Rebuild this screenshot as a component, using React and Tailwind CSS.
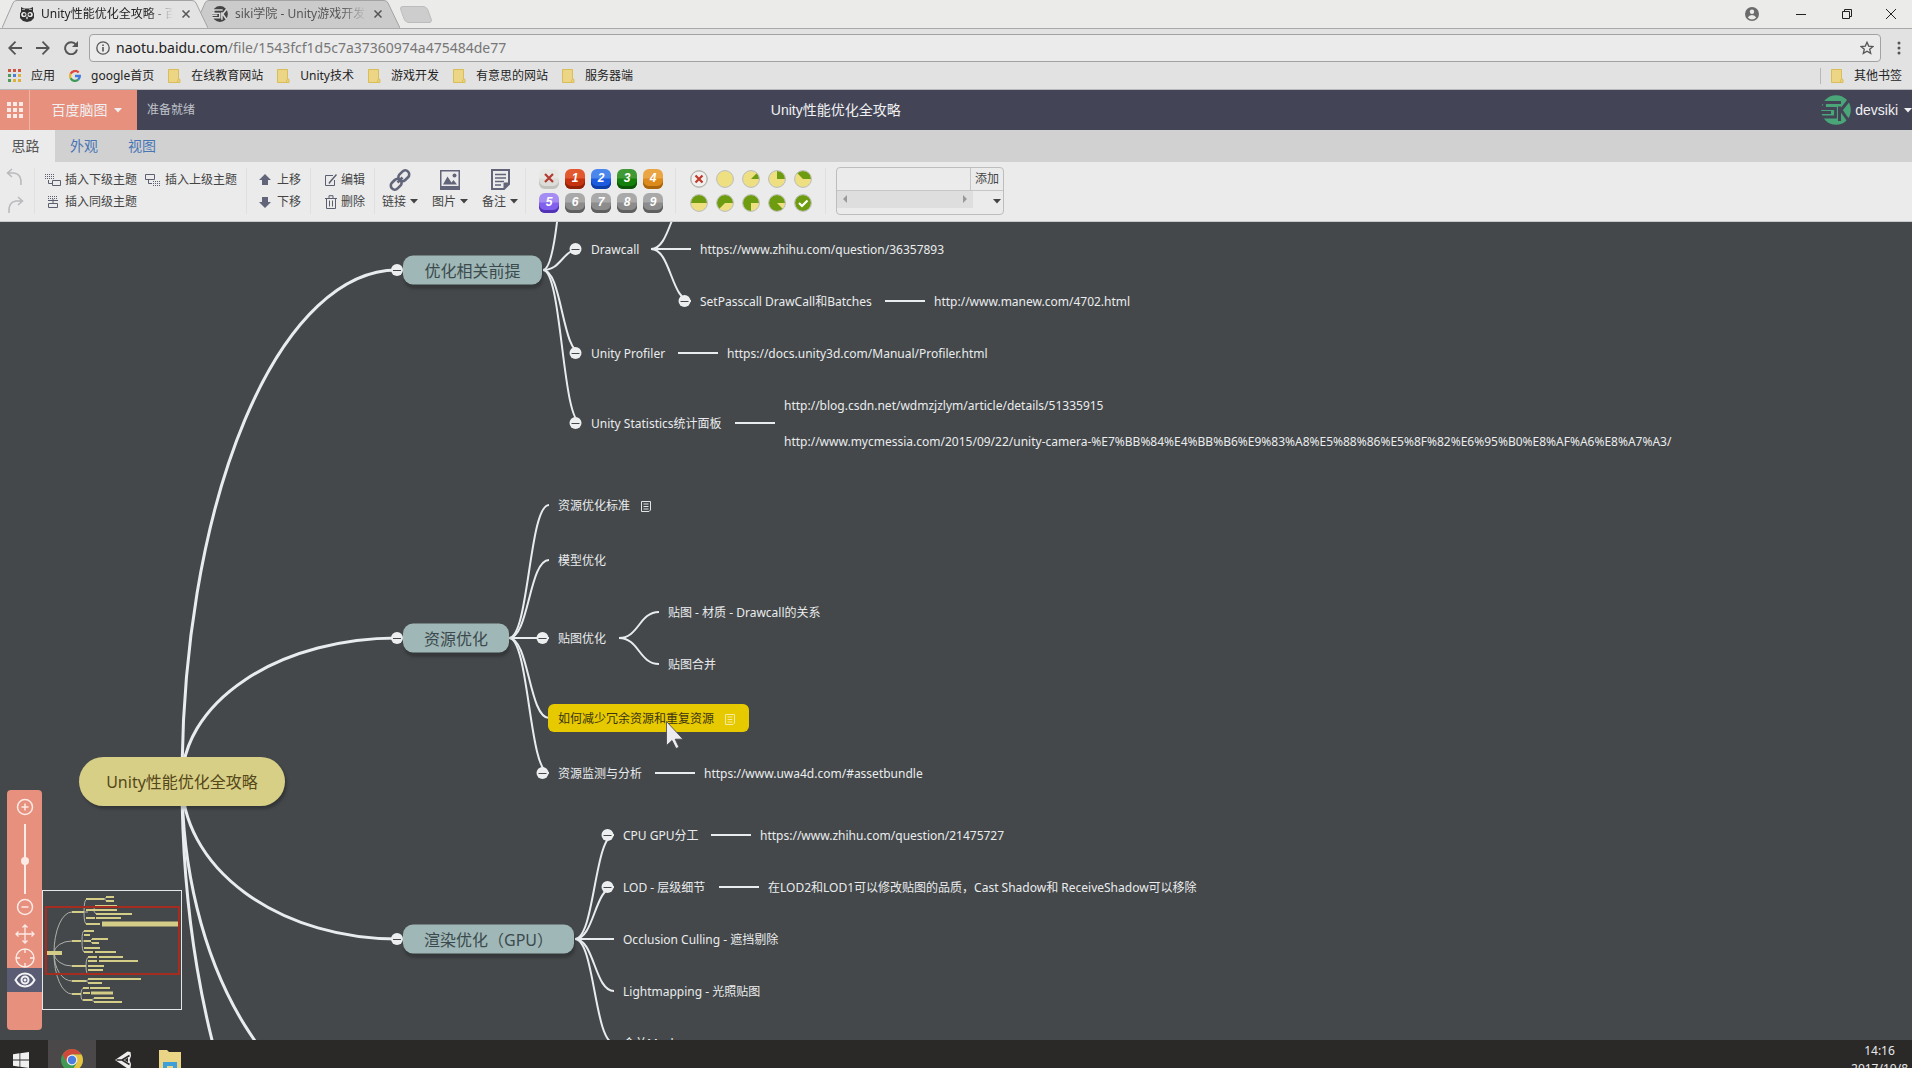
import React from "react";

const UI = "font-['Noto_Sans','Noto_Sans_CJK_SC',sans-serif]";

/* ---------- shared bits ---------- */

function Caret({ className = "" }) {
  return (
    <svg viewBox="0 0 8 5" className={"h-[5px] w-2 shrink-0 fill-current " + className} aria-hidden="true">
      <path d="M0 0h8L4 4.6z" />
    </svg>
  );
}

function Folder() {
  return (
    <svg viewBox="0 0 13 14" className="h-3.5 w-[13px] shrink-0" aria-hidden="true">
      <path d="M.5.5h10v9l1.500 1v3H.5z" fill="#ecd584" stroke="#d9bd58" />
      <path d="M10.500 9.500 9 13.500" stroke="#d9bd58" fill="none" />
    </svg>
  );
}

/* ---------- browser frame ---------- */

function BrowserTab({ active, icon, title, className = "" }) {
  return (
    <div className={"relative flex h-7 w-[206px] shrink-0 items-center pl-[18px] " + className}>
      <svg viewBox="0 0 206 28" preserveAspectRatio="none" className="absolute inset-0 h-full w-full" aria-hidden="true">
        <path
          d="M0 28 L11 3 Q12 .5 15 .5 H190 Q193 .5 194 3 L206 28"
          fill={active ? "#e3e3e3" : "#cbcbcb"}
          stroke="#a3a3a3"
        />
      </svg>
      <button className="relative flex min-w-0 flex-1 items-center gap-[7px] text-left">
        {icon}
        <span
          className={
            "block w-[132px] overflow-hidden whitespace-nowrap text-xs [mask-image:linear-gradient(to_right,#000_80%,transparent)] " +
            (active ? "text-[#222]" : "text-[#555]")
          }
        >
          {title}
        </span>
      </button>
      <button className="relative mr-4 grid size-3 place-items-center text-[#555]" aria-label="关闭标签页">
        <svg viewBox="0 0 8 8" className="size-2">
          <path d="M.5.5l7 7M7.5.5l-7 7" stroke="currentColor" strokeWidth="1.5" />
        </svg>
      </button>
    </div>
  );
}

function OwlIcon() {
  return (
    <svg viewBox="0 0 14 15" className="h-[15px] w-3.5 shrink-0" aria-hidden="true">
      <path d="M1 0l3 1.400h6L13 0v5l1 1v5l-3 3-4 1-4-1-3-3V6l1-1z" fill="#333" />
      <path d="M2 2.500h3M9 2.500h3" stroke="#bbb" strokeWidth=".8" />
      <circle cx="3.800" cy="7.500" r="2.600" fill="#eee" />
      <circle cx="10.200" cy="7.500" r="2.600" fill="#eee" />
      <circle cx="4.200" cy="7.500" r="1.300" fill="#333" />
      <circle cx="9.800" cy="7.500" r="1.300" fill="#333" />
      <path d="M7 9l1 2-1 1.400-1-1.400z" fill="#ddd" />
    </svg>
  );
}

function SkLogo({ color, cut, className }) {
  return (
    <svg viewBox="0 0 30 30" className={"shrink-0 " + className} aria-hidden="true">
      <circle cx="15" cy="15" r="14.800" fill={color} />
      <path d="M0 7.500H20M3.500 7.500V13.500H14.500V22H0M0 17.500H10" stroke={cut} strokeWidth="2.800" fill="none" />
      <path d="M0 10.500h3v4.500H0z" fill={cut} />
      <path d="M5 10.500h14" stroke={color} strokeWidth="2.600" />
      <path d="M18.500 11.500V26M28 5l-8 10 7 10" stroke={cut} strokeWidth="3" fill="none" />
    </svg>
  );
}

function TabStrip() {
  return (
    <div className="relative flex h-7 items-stretch bg-[#ebebea] pl-0.5">
      <BrowserTab active icon={<OwlIcon />} title="Unity性能优化全攻略 - 百度脑图" className="z-10" />
      <BrowserTab
        icon={<SkLogo color="#444" cut="#d8d8d8" className="size-4" />}
        title="siki学院 - Unity游戏开发学院"
        className="-ml-3.5"
      />
      <button aria-label="新标签页" className="my-auto ml-0.5 h-[17px] w-7 skew-x-[20deg] rounded-sm border border-[#bcbcbc] bg-[#cdcdcd]" />
      <div className="ml-auto flex items-center text-[#222]">
        <button aria-label="用户" className="grid h-7 w-[52px] place-items-center">
          <svg viewBox="0 0 14 14" className="size-3.5">
            <circle cx="7" cy="7" r="7" fill="#6b6b6b" />
            <circle cx="7" cy="4.800" r="2.200" fill="#ebebea" />
            <path d="M2.800 10.500q1.200-2.500 4.200-2.500t4.200 2.500Q9.500 12.400 7 12.400t-4.200-1.900z" fill="#ebebea" />
          </svg>
        </button>
        <button aria-label="最小化" className="grid h-7 w-[46px] place-items-center">
          <span className="h-px w-2.5 bg-[#222]" />
        </button>
        <button aria-label="还原" className="grid h-7 w-[46px] place-items-center">
          <svg viewBox="0 0 10 10" className="size-2.5" fill="none" stroke="currentColor">
            <path d="M.5 2.500h7v7h-7zM2.500 2.500v-2h7v7h-2" />
          </svg>
        </button>
        <button aria-label="关闭" className="grid h-7 w-[42px] place-items-center">
          <svg viewBox="0 0 10 10" className="size-2.5" stroke="currentColor">
            <path d="M0 0l10 10M10 0L0 10" />
          </svg>
        </button>
      </div>
    </div>
  );
}

function AddressBar() {
  return (
    <div className="flex h-[34px] items-center border-t border-[#a9a9a9] bg-[#e2e2e2] pt-1">
      <div className="flex w-[89px] shrink-0 items-center gap-3.5 pl-2 text-[#555]">
        <button aria-label="后退">
          <svg viewBox="0 0 14 14" className="size-3.5" fill="none" stroke="currentColor" strokeWidth="1.800"><path d="M7.500.700L1.200 7l6.300 6.300M1.500 7H14" /></svg>
        </button>
        <button aria-label="前进">
          <svg viewBox="0 0 14 14" className="size-3.5" fill="none" stroke="currentColor" strokeWidth="1.800"><path d="M6.500.700L12.800 7l-6.300 6.300M12.500 7H0" /></svg>
        </button>
        <button aria-label="重新加载">
          <svg viewBox="0 0 14 14" className="size-3.5" fill="none" stroke="currentColor" strokeWidth="1.900"><path d="M12 3.800A6 6 0 1 0 13 8.500" /><path d="M14 0v6H8z" fill="currentColor" stroke="none" /></svg>
        </button>
      </div>
      <div className="flex h-7 min-w-0 flex-1 items-center gap-1.5 rounded-sm border border-[#a2a2a2] bg-[#ebebeb] pl-1.5 pr-1.5">
        <svg viewBox="0 0 14 14" className="size-3.5 shrink-0" fill="none" stroke="#555" strokeWidth="1.300"><circle cx="7" cy="7" r="6.200" /><path d="M7 6v4.500M7 3.400v1.500" strokeWidth="1.600" /></svg>
        <div className="flex-1 whitespace-nowrap text-sm text-[#777]" role="textbox" aria-label="地址">
          <span className="text-[#222]">naotu.baidu.com</span>/file/1543fcf1d5c7a37360974a475484de77
        </div>
        <button aria-label="收藏">
          <svg viewBox="0 0 14 14" className="size-3.5" fill="none" stroke="#555" strokeWidth="1.300"><path d="M7 1.300l1.700 3.800 4.200.400-3.200 2.800 1 4.100L7 10.200l-3.700 2.200 1-4.100L1.100 5.500l4.200-.400z" /></svg>
        </button>
      </div>
      <button aria-label="菜单" className="grid w-[31px] place-items-center pl-1">
        <svg viewBox="0 0 4 14" className="h-3.5 w-1 fill-[#555]"><circle cx="2" cy="2" r="1.500" /><circle cx="2" cy="7" r="1.500" /><circle cx="2" cy="12" r="1.500" /></svg>
      </button>
    </div>
  );
}

const BOOKMARKS = ["在线教育网站", "Unity技术", "游戏开发", "有意思的网站", "服务器端"];
const APP_COLORS = ["#d0553f", "#d0553f", "#d0553f", "#4f9a58", "#4a7fd6", "#dfb13a", "#4f9a58", "#dfb13a", "#dfb13a"];

function BookmarkBar() {
  return (
    <nav className="flex h-7 items-center gap-3.5 border-b border-[#b5b7bb] bg-[#e2e2e2] pl-2 pr-2.5 text-xs text-[#222]">
      <a href="#apps" className="flex items-center gap-2.5 whitespace-nowrap">
        <span className="grid size-[13px] grid-cols-3 gap-0.5">
          {APP_COLORS.map((c, i) => (
            <span key={i} className="size-[3px]" style={{ background: c }} />
          ))}
        </span>
        应用
      </a>
      <a href="#google" className="flex items-center gap-2.5 whitespace-nowrap">
        <svg viewBox="0 0 12 12" className="size-3" fill="none" strokeWidth="2.300" aria-hidden="true">
          <path d="M9.700 2.500A5 5 0 0 0 1.600 3.800" stroke="#dd4b3e" />
          <path d="M1.600 3.800a5 5 0 0 0 0 4.400" stroke="#e8b62c" />
          <path d="M1.600 8.200a5 5 0 0 0 7.600 1.500" stroke="#3b9a55" />
          <path d="M9.200 9.700A5 5 0 0 0 10.800 6H6" stroke="#4079dc" />
        </svg>
        google首页
      </a>
      {BOOKMARKS.map((b) => (
        <a key={b} href="#folder" className="flex items-center gap-2.5 whitespace-nowrap">
          <Folder />
          {b}
        </a>
      ))}
      <a href="#other" className="ml-auto flex items-center gap-2.5 whitespace-nowrap">
        <span className="h-4 w-px bg-[#b8b8b8]" />
        <Folder />
        其他书签
      </a>
    </nav>
  );
}

/* ---------- application header ---------- */

function AppHeader() {
  return (
    <header className="flex h-10 items-stretch bg-[#434556] font-['Liberation_Sans','Noto_Sans_CJK_SC',sans-serif] text-sm text-[#f0f0f2]">
      <div className="flex w-2/5 items-stretch">
        <button aria-label="应用列表" className="grid w-[30px] shrink-0 place-items-center border-r border-[#f0b5a6] bg-[#e6907d]">
          <span className="grid grid-cols-3 gap-0.5">
            {Array.from({ length: 9 }, (_, i) => (
              <span key={i} className="size-1 bg-[#fbeae6]" />
            ))}
          </span>
        </button>
        <button className="flex w-[107px] shrink-0 items-center justify-center gap-1.5 whitespace-nowrap bg-[#e6907d] pl-1.5">
          百度脑图
          <Caret />
        </button>
        <span className="ml-2.5 self-center text-xs text-[#c0c2ca]">准备就绪</span>
      </div>
      <h1 className="self-center pl-1.5">Unity性能优化全攻略</h1>
      <button className="ml-auto flex items-center gap-1">
        <SkLogo color="#4aa578" cut="#434556" className="size-[30px]" />
        devsiki
        <Caret className="ml-0.5" />
      </button>
    </header>
  );
}

function RibbonTabs() {
  return (
    <nav className="flex h-8 bg-[#d1d1d2] text-sm text-[#4876b5]">
      <button className="w-[55px] bg-[#ebebeb] pr-1 text-[#555]">思路</button>
      <button className="w-[58px]">外观</button>
      <button className="w-[58px]">视图</button>
    </nav>
  );
}

/* ---------- ribbon ---------- */

function ChildIcon() {
  return (
    <svg viewBox="0 0 16 12" className="h-3 w-4 shrink-0" fill="none" stroke="#5c5f70">
      <path d="M0 .5h9M0 2.500h9M0 4.500h9" strokeDasharray="1 1" />
      <path d="M3.500 6v3.500H7M7.500 6.500h8v5h-8z" />
    </svg>
  );
}
function ParentIcon() {
  return (
    <svg viewBox="0 0 16 12" className="h-3 w-4 shrink-0" fill="none" stroke="#5c5f70">
      <path d="M.5.5h9v5h-9zM3.500 6v3.500H7" />
      <path d="M8 7.500h8M8 9.500h8M8 11.500h8" strokeDasharray="1 1" />
    </svg>
  );
}
function SiblingIcon() {
  return (
    <svg viewBox="0 0 16 12" className="h-3 w-4 shrink-0" fill="none" stroke="#5c5f70">
      <path d="M3 .5h10M3 2.500h10" strokeDasharray="1 1" />
      <path d="M8 3v4M3 4.500h10M3.500 7.500h9v4h-9z" />
    </svg>
  );
}

function ToolButton({ icon, children, gap = "gap-1" }) {
  return (
    <button className={"flex h-[22px] items-center whitespace-nowrap " + gap}>
      {icon}
      {children}
    </button>
  );
}

function MoveIcon({ down }) {
  return (
    <svg viewBox="0 0 12 12" className={"size-3 shrink-0 " + (down ? "rotate-180" : "")} fill="#62657a">
      <path d="M6 0l6 6H9v5H3V6H0z" />
    </svg>
  );
}

function BigButton({ icon, label }) {
  return (
    <button className="flex w-[50px] flex-col items-center gap-0.5 whitespace-nowrap">
      <span className="grid h-6 place-items-center">{icon}</span>
      <span className="flex items-center gap-1">
        {label}
        <Caret />
      </span>
    </button>
  );
}

const PRIORITIES = [
  ["#e3592f", "#c5330f", "#8f2207"],
  ["#4a86ec", "#1c5be0", "#0c3da5"],
  ["#3f9a35", "#14800c", "#0b5506"],
  ["#eaa544", "#dd8a1c", "#a9650d"],
  ["#a48cf2", "#8160ee", "#5232b5"],
  ["#a9a9a9", "#8c8c8c", "#5f5f5f"],
  ["#a9a9a9", "#8c8c8c", "#5f5f5f"],
  ["#a9a9a9", "#8c8c8c", "#5f5f5f"],
  ["#a9a9a9", "#8c8c8c", "#5f5f5f"],
];

function Priority({ colors, n }) {
  const [top, mid, edge] = colors;
  return (
    <button
      aria-label={n ? "优先级 " + n : "移除优先级"}
      className="grid size-5 place-items-center rounded-md pb-0.5 font-['Liberation_Sans',sans-serif] text-xs font-bold italic leading-none text-white"
      style={{ background: `linear-gradient(${top} 45%, ${mid} 50%)`, boxShadow: `inset 0 -3px 0 ${edge}` }}
    >
      {n || (
        <svg viewBox="0 0 10 10" className="size-2.5" stroke="#b33a30" strokeWidth="2.200">
          <path d="M1 1l8 8M9 1L1 9" />
        </svg>
      )}
    </button>
  );
}

function Progress({ step }) {
  let body;
  if (step === 0) {
    body = (
      <>
        <circle cx="9" cy="9" r="8" fill="#f0f0ee" stroke="#bbb" />
        <path d="M5.500 5.500l7 7M12.500 5.500l-7 7" stroke="#c0392b" strokeWidth="2.200" />
      </>
    );
  } else if (step === 9) {
    body = (
      <>
        <circle cx="9" cy="9" r="8" fill="#6e9c10" />
        <path d="M5 9l3 3 5.500-5.500" stroke="#fff" strokeWidth="2.200" fill="none" />
      </>
    );
  } else {
    const part = step - 1;
    const a = (-part * Math.PI) / 4;
    body = (
      <>
        <circle cx="9" cy="9" r="8" fill="#eedf80" />
        {part > 0 && (
          <path
            d={`M9 9L17 9A8 8 0 ${part > 4 ? 1 : 0} 0 ${9 + 8 * Math.cos(a)} ${9 + 8 * Math.sin(a)}Z`}
            fill="#6e9c10"
          />
        )}
      </>
    );
  }
  return (
    <button aria-label={"进度 " + step} className="grid size-5 place-items-center">
      <svg viewBox="0 0 18 18" className="size-[18px]">
        {body}
        <circle cx="9" cy="9" r="8.400" fill="none" stroke="#b4b4ac" strokeWidth=".9" />
      </svg>
    </button>
  );
}

function Group({ className = "", children }) {
  return <div className={"flex h-[46px] shrink-0 border-r border-[#e0e0e0] " + className}>{children}</div>;
}

function Ribbon() {
  return (
    <div className="flex h-[60px] items-center border-b border-[#c9cbcb] bg-[#ebebeb] pb-0.5 text-xs text-[#444]">
      <Group className="w-[35px] flex-col items-center justify-between pr-1">
        <button aria-label="撤销">
          <svg viewBox="0 0 18 18" className="size-[18px]" fill="none" stroke="#b9b9bd" strokeWidth="1.500"><path d="M6 1L1.500 5 6 9M2 5h6q8 1 7 12" /></svg>
        </button>
        <button aria-label="重做">
          <svg viewBox="0 0 18 18" className="size-[18px]" fill="none" stroke="#b9b9bd" strokeWidth="1.500"><path d="M12 1l4.500 4L12 9M16 5h-6Q2 6 3 17" /></svg>
        </button>
      </Group>
      <Group className="w-[212px] flex-wrap content-center gap-x-2 pl-2.5">
        <ToolButton icon={<ChildIcon />}>插入下级主题</ToolButton>
        <ToolButton icon={<ParentIcon />}>插入上级主题</ToolButton>
        <ToolButton icon={<SiblingIcon />}>插入同级主题</ToolButton>
      </Group>
      <Group className="w-16 flex-col justify-center pl-3">
        <ToolButton gap="gap-1.5" icon={<MoveIcon />}>上移</ToolButton>
        <ToolButton gap="gap-1.5" icon={<MoveIcon down />}>下移</ToolButton>
      </Group>
      <Group className="w-16 flex-col justify-center pl-3.5">
        <ToolButton
          icon={
            <svg viewBox="0 0 12 12" className="size-3 shrink-0" fill="none" stroke="#5c5f70">
              <path d="M8 1.500H.5v10h9V6" />
              <path d="M11.500.5L5 8l-1 1.500" strokeWidth="1.500" />
            </svg>
          }
        >
          编辑
        </ToolButton>
        <ToolButton
          icon={
            <svg viewBox="0 0 12 14" className="h-3.5 w-3 shrink-0" fill="none" stroke="#5c5f70">
              <path d="M0 3.500h12M4 3V.700h4V3M1.500 3.500v10h9v-10M4.500 5.500v6M7.500 5.500v6" />
            </svg>
          }
        >
          删除
        </ToolButton>
      </Group>
      <Group className="w-[151px] justify-center">
        <BigButton
          label="链接"
          icon={
            <svg viewBox="0 0 22 22" className="size-[22px]" fill="none" stroke="#62657a" strokeWidth="2.600">
              <rect x="-4" y="-6" width="8" height="12" rx="4" transform="translate(14.800 6.800) rotate(45)" />
              <rect x="-4" y="-6" width="8" height="12" rx="4" transform="translate(7.200 15.200) rotate(45)" />
              <path d="M8.500 13.500l5-5" />
            </svg>
          }
        />
        <BigButton
          label="图片"
          icon={
            <svg viewBox="0 0 20 20" className="size-5" fill="#62657a">
              <path d="M0 0h20v20H0zM1.500 1.500v14.500h17V1.500z" fillRule="evenodd" />
              <path d="M3 14.500l4.500-8 4 6 2-2.500 3.500 4.500z" />
              <circle cx="14.500" cy="5.500" r="2" />
            </svg>
          }
        />
        <BigButton
          label="备注"
          icon={
            <svg viewBox="0 0 19 21" className="h-[21px] w-[19px]" fill="none" stroke="#62657a">
              <path d="M1 1h17v14l-5 5H1z" strokeWidth="2" />
              <path d="M18 14h-5v6z" fill="#62657a" />
              <path d="M4 5.500h11M4 9h11M4 12.500h9M4 16h6" strokeWidth="1.500" />
            </svg>
          }
        />
      </Group>
      <Group className="w-[150px] items-center pl-[13px]">
        <div className="grid grid-cols-5 gap-x-1.5 gap-y-1">
          <Priority colors={["#e6e6e2", "#dcdcd8", "#c2c2be"]} />
          {PRIORITIES.map((c, i) => (
            <Priority key={i} colors={c} n={i + 1} />
          ))}
        </div>
      </Group>
      <Group className="w-[150px] items-center pl-[13px]">
        <div className="grid grid-cols-5 gap-x-1.5 gap-y-1">
          {Array.from({ length: 10 }, (_, i) => (
            <Progress key={i} step={i} />
          ))}
        </div>
      </Group>
      <div className="ml-2.5 flex h-12 w-[168px] flex-col rounded border border-[#bdbdbd]">
        <div className="flex h-[23px] border-b border-[#c6c6c6]">
          <input aria-label="标签" className="min-w-0 flex-1 bg-transparent px-1 outline-none" />
          <button className="w-[33px] whitespace-nowrap border-l border-[#c6c6c6]">添加</button>
        </div>
        <div className="flex flex-1 items-start justify-between">
          <div className="flex h-[17px] w-[136px] items-center justify-between bg-[#dedede] px-1.5">
            <svg viewBox="0 0 4 8" className="h-2 w-1 fill-[#999]"><path d="M4 0v8L0 4z" /></svg>
            <svg viewBox="0 0 4 8" className="h-2 w-1 fill-[#999]"><path d="M0 0v8l4-4z" /></svg>
          </div>
          <button aria-label="更多标签" className="mr-0.5 mt-2">
            <Caret />
          </button>
        </div>
      </div>
    </div>
  );
}

/* ---------- mind map ---------- */

const BRANCHES = [
  { text: "优化相关前提", x: 403, y: 48, w: 139 },
  { text: "资源优化", x: 403, y: 416, w: 106 },
  { text: "渲染优化（GPU）", x: 403, y: 717, w: 171 },
];

const TOPICS = [
  { text: "Drawcall", x: 591, y: 27, fold: true },
  { text: "https://www.zhihu.com/question/36357893", x: 700, y: 27 },
  { text: "SetPasscall DrawCall和Batches", x: 700, y: 79, fold: true },
  { text: "http://www.manew.com/4702.html", x: 934, y: 79 },
  { text: "Unity Profiler", x: 591, y: 131, fold: true },
  { text: "https://docs.unity3d.com/Manual/Profiler.html", x: 727, y: 131 },
  { text: "Unity Statistics统计面板", x: 591, y: 201, fold: true },
  { text: "http://blog.csdn.net/wdmzjzlym/article/details/51335915", x: 784, y: 183 },
  {
    text: "http://www.mycmessia.com/2015/09/22/unity-camera-%E7%BB%84%E4%BB%B6%E9%83%A8%E5%88%86%E5%8F%82%E6%95%B0%E8%AF%A6%E8%A7%A3/",
    x: 784,
    y: 219,
  },
  { text: "资源优化标准", x: 558, y: 283, note: true },
  { text: "模型优化", x: 558, y: 338 },
  { text: "贴图优化", x: 558, y: 416, fold: true },
  { text: "贴图 - 材质 - Drawcall的关系", x: 668, y: 390 },
  { text: "贴图合并", x: 668, y: 442 },
  { text: "如何减少冗余资源和重复资源", x: 558, y: 496, note: true, selected: true },
  { text: "资源监测与分析", x: 558, y: 551, fold: true },
  { text: "https://www.uwa4d.com/#assetbundle", x: 704, y: 551 },
  { text: "CPU GPU分工", x: 623, y: 613, fold: true },
  { text: "https://www.zhihu.com/question/21475727", x: 760, y: 613 },
  { text: "LOD - 层级细节", x: 623, y: 665, fold: true },
  { text: "在LOD2和LOD1可以修改贴图的品质，Cast Shadow和 ReceiveShadow可以移除", x: 768, y: 665 },
  { text: "Occlusion Culling - 遮挡剔除", x: 623, y: 717 },
  { text: "Lightmapping - 光照贴图", x: 623, y: 769 },
  { text: "合并Mesh", x: 623, y: 821 },
];

const CURVES = [
  [543, 48, 581, -137],
  [543, 48, 581, 27],
  [543, 48, 581, 131],
  [543, 48, 581, 201],
  [651, 27, 691, -25],
  [651, 27, 691, 27],
  [651, 27, 691, 79],
  [885, 79, 925, 79],
  [678, 131, 718, 131],
  [735, 201, 775, 201],
  [509, 416, 549, 283],
  [509, 416, 549, 338],
  [509, 416, 549, 416],
  [509, 416, 549, 496],
  [509, 416, 549, 551],
  [619, 416, 659, 390],
  [619, 416, 659, 442],
  [655, 551, 695, 551],
  [575, 717, 614, 613],
  [575, 717, 614, 665],
  [575, 717, 614, 717],
  [575, 717, 614, 769],
  [575, 717, 614, 821],
  [711, 613, 751, 613],
  [719, 665, 759, 665],
];

const ROOT_RADII = [[-511, 1], [-143, 1], [158, 0], [346, 0], [508, 0]];

function NoteIcon({ color }) {
  return (
    <svg viewBox="0 0 10 11" className="h-[11px] w-2.5 shrink-0" fill="none" stroke={color}>
      <path d="M.5.5h9v8.500l-1.500 1.500H.5zM2.500 3h5M2.500 5.500h5M2.500 8h5" />
    </svg>
  );
}

function MindMap() {
  return (
    <main className="relative min-h-0 flex-1 overflow-hidden bg-[#44484a] text-xs text-[#eaecee]">
      <svg className="absolute inset-0 h-full w-full" fill="none" stroke="#e9ecee" aria-hidden="true">
        <g strokeWidth="3">
          {ROOT_RADII.map(([ry, sweep]) => (
            <path key={ry} d={`M182 559A215 ${Math.abs(ry)} 0 0 ${sweep} 397 ${559 + ry}`} />
          ))}
        </g>
        <g strokeWidth="2">
          {CURVES.map(([x1, y1, x2, y2], i) => {
            const m = (x1 + x2) / 2;
            return <path key={i} d={`M${x1} ${y1}C${m} ${y1} ${m} ${y2} ${x2} ${y2}`} />;
          })}
        </g>
        <g stroke="#44484a">
          {BRANCHES.map((b) => (
            <g key={b.text}>
              <circle cx="397" cy={b.y} r="6" fill="#eceeef" stroke="none" />
              <path d={`M393 ${b.y + 0.5}h8`} />
            </g>
          ))}
          {TOPICS.filter((t) => t.fold).map((t) => (
            <g key={t.text}>
              <circle cx={t.x - 15.5} cy={t.y} r="6" fill="#eceeef" stroke="none" />
              <path d={`M${t.x - 19.5} ${t.y + 0.5}h8`} />
            </g>
          ))}
        </g>
      </svg>

      <div className="absolute left-[79px] top-[535px] flex h-[49px] w-[206px] items-center justify-center whitespace-nowrap rounded-full bg-[#d8cf86] text-base text-[#54481a] shadow-[2px_3px_3px_rgba(0,0,0,0.25)]">
        Unity性能优化全攻略
      </div>

      {BRANCHES.map((b) => (
        <div
          key={b.text}
          className="absolute flex h-[29px] -translate-y-1/2 items-center justify-center whitespace-nowrap rounded-[10px] bg-[#a0b7b7] text-base text-[#3b4a4c] shadow-[1px_4px_3px_rgba(0,0,0,0.22)]"
          style={{ left: b.x, top: b.y, width: b.w }}
        >
          {b.text}
        </div>
      ))}

      {TOPICS.map((t) => (
        <div
          key={t.text}
          className={
            "absolute -ml-2.5 flex h-7 -translate-y-1/2 items-center gap-[11px] whitespace-nowrap rounded-md pl-2.5 pt-0.5 " +
            (t.selected ? "bg-[#e7c900] pr-3.5 text-[#3a3410]" : "")
          }
          style={{ left: t.x, top: t.y }}
        >
          {t.text}
          {t.note && <NoteIcon color={t.selected ? "#f5eaa0" : "#e2e4e6"} />}
        </div>
      ))}

      <Navigator />

      <svg viewBox="0 0 18 28" className="absolute left-[666px] top-[499px] h-7 w-[18px]" aria-hidden="true">
        <path d="M.5.5v24l5.500-5 4 8 3-1.300-3.800-8H17z" fill="#ececf0" stroke="#444" strokeWidth=".8" />
      </svg>
    </main>
  );
}

/* [x1, x2, y] of every bar in the overview panel */
const MINI_BARS = [
  [43, 61, 8], [63, 71, 6], [63, 71, 10], [52, 74, 15], [43, 51, 19], [51, 74, 19], [53, 69, 23], [69, 89, 23],
  [43, 52, 27], [53, 78, 27], [43, 57, 33], [29, 41, 21], [41, 51, 40], [41, 47, 44], [41, 48, 50], [49, 65, 48],
  [49, 56, 52], [41, 57, 57], [41, 50, 61], [52, 73, 61], [29, 38, 50], [45, 54, 66], [56, 80, 66], [45, 54, 70],
  [56, 95, 70], [45, 61, 75], [45, 60, 79], [45, 52, 83], [29, 43, 75], [45, 98, 88], [45, 59, 92], [29, 43, 90],
  [40, 46, 97], [47, 67, 97], [40, 47, 102], [51, 71, 107], [40, 49, 109], [51, 79, 111], [29, 38, 103],
];

function MiniMap() {
  return (
    <svg viewBox="0 0 138 118" className="block h-[118px] w-[138px]" fill="none" aria-hidden="true">
      <g stroke="#aeb2a8">
        {[21, 50, 75, 90, 103].map((y) => (
          <path key={y} d={`M11 62A18 ${Math.abs(62 - y)} 0 0 ${y < 62 ? 1 : 0} 29 ${y}`} />
        ))}
        <path d="M44 8q-3 0-3 13t3 12M40 21h5M61 8l3-2M61 8l3 2M50 19l3-4M50 19l3 4M41 40q-2 0-2 10t2 11M39 50h3M47 50l2-2M47 50l2 2M46 66q-3 0-3 9t3 8M43 90l3-2M43 90l3 2M41 97q-3 0-3 7t4 5M48 109l4-2M48 109l4 2" />
      </g>
      <g stroke="#d3cd87" strokeWidth="2">
        {MINI_BARS.map(([a, b, y], i) => (
          <path key={i} d={`M${a} ${y}H${b}`} />
        ))}
        <path d="M3 62h16" strokeWidth="4" />
        <path d="M59 33h76" strokeWidth="5" />
        <path d="M48 102h22" strokeWidth="3" />
      </g>
      <rect x="3" y="16" width="133" height="67" stroke="#a62c20" strokeWidth="2" />
    </svg>
  );
}

function Navigator() {
  return (
    <aside className="absolute bottom-2.5 left-[7px] flex items-start">
      <div className="flex h-60 w-[35px] flex-col items-center rounded bg-[#e6907d] pt-2 text-[#fbeae6]">
        <button aria-label="放大">
          <svg viewBox="0 0 18 18" className="size-[18px]" fill="none" stroke="currentColor" strokeWidth="1.500"><circle cx="9" cy="9" r="7.500" /><path d="M5.500 9h7M9 5.500v7" /></svg>
        </button>
        <div className="mb-1 mt-2 grid h-[70px] w-2 place-items-center">
          <span className="col-start-1 row-start-1 h-full w-0.5 bg-[#fbeae6]" />
          <span className="col-start-1 row-start-1 mt-1 size-2 rounded-full bg-[#fbeae6]" />
          <input
            type="range"
            aria-label="缩放"
            defaultValue="50"
            className="col-start-1 row-start-1 h-[70px] w-2 opacity-0 [writing-mode:vertical-lr]"
          />
        </div>
        <button aria-label="缩小">
          <svg viewBox="0 0 18 18" className="size-[18px]" fill="none" stroke="currentColor" strokeWidth="1.500"><circle cx="9" cy="9" r="7.500" /><path d="M5.500 9h7" /></svg>
        </button>
        <button aria-label="移动" className="mt-2">
          <svg viewBox="0 0 20 20" className="size-5" fill="none" stroke="currentColor" strokeWidth="1.300"><path d="M10 1v18M1 10h18M7.500 3.500L10 1l2.500 2.500M7.500 16.500L10 19l2.500-2.500M3.500 7.500L1 10l2.500 2.500M16.500 7.500L19 10l-2.500 2.500" /></svg>
        </button>
        <button aria-label="定位" className="mt-1">
          <svg viewBox="0 0 20 20" className="size-5" fill="none" stroke="currentColor" strokeWidth="1.400"><circle cx="10" cy="10" r="9" /><path d="M10 1v4M10 15v4M1 10h4M15 10h4" /></svg>
        </button>
        <button aria-label="导航器" className="grid h-6 w-full place-items-center bg-[#5a5c74]">
          <svg viewBox="0 0 22 16" className="h-4 w-[22px]" fill="none" stroke="#f4f4f6" strokeWidth="2"><path d="M1.500 8Q5 1.500 11 1.500T20.500 8Q17 14.500 11 14.500T1.500 8z" /><circle cx="11" cy="8" r="3.500" /><circle cx="11" cy="8" r="1.500" fill="#f4f4f6" stroke="none" /></svg>
        </button>
      </div>
      <div className="mt-[100px] border border-[#e4e6e8] bg-[#44484a]">
        <MiniMap />
      </div>
    </aside>
  );
}

/* ---------- desktop task bar ---------- */

function TaskBar() {
  return (
    <footer className="h-7 shrink-0 overflow-hidden bg-[#2b2928]">
      <div className="flex h-10 items-stretch">
        <button aria-label="开始" className="grid w-12 place-items-center">
          <svg viewBox="0 0 16 16" className="mr-1.5 size-4" fill="#f0f0f0"><path d="M0 2.200L6.500 1.300V7.600H0zM7.300 1.200L16 0v7.600H7.300zM0 8.400h6.500v6.300L0 13.800zM7.300 8.400H16V16l-8.700-1.200z" /></svg>
        </button>
        <button aria-label="浏览器" className="grid w-12 place-items-center bg-[#4a4848]">
          <svg viewBox="0 0 22 22" className="size-[22px]">
            <circle cx="11" cy="11" r="11" fill="#3f9a55" />
            <path d="M1.500 5.500A11 11 0 0 1 20.500 5.500H11L6.200 13.700z" fill="#cf4a3a" />
            <path d="M20.500 5.500A11 11 0 0 1 11 22L15.800 13.700 11 5.500z" fill="#e8c33f" />
            <circle cx="11" cy="11" r="5.400" fill="#eee" />
            <circle cx="11" cy="11" r="4.200" fill="#4a7fe0" />
          </svg>
        </button>
        <button aria-label="Unity" className="grid w-[53px] place-items-center">
          <svg viewBox="0 0 16 18" className="h-[18px] w-4">
            <path d="M0 9L12.500.5l3 .5.5 4-1.500 4 1.500 4-.5 4-3 .5z" fill="#eee" />
            <path d="M7 9L14.500 4.500M7 9l7.500 4.500M7 9H1.500" stroke="#2b2928" strokeWidth="1.600" />
            <path d="M9.500 9L13 6.800v4.400z" fill="#2b2928" />
          </svg>
        </button>
        <button aria-label="文件夹" className="grid w-[42px] place-items-center">
          <svg viewBox="0 0 22 20" className="h-5 w-[22px]">
            <path d="M0 0h8l2 2h12v18H0z" fill="#ead485" />
            <path d="M4 20v-8h14v8h-4v-4H8v4z" fill="#3f9fd8" />
          </svg>
        </button>
        <div className="ml-auto flex flex-col items-center whitespace-nowrap pr-1 pt-0.5 text-xs leading-[18px] text-[#e8e8e8]">
          <span>14:16</span>
          <span>2017/10/8</span>
        </div>
      </div>
    </footer>
  );
}

export default function App() {
  return (
    <div className={"flex h-screen flex-col overflow-hidden " + UI}>
      <div className="shrink-0">
        <TabStrip />
        <AddressBar />
        <BookmarkBar />
        <AppHeader />
        <RibbonTabs />
        <Ribbon />
      </div>
      <MindMap />
      <TaskBar />
    </div>
  );
}
